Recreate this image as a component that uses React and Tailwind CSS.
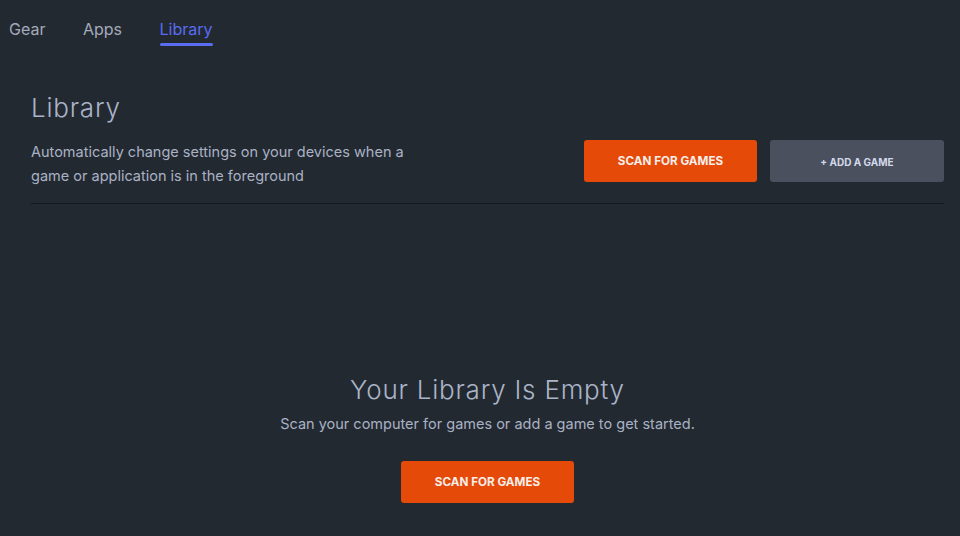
export default function App() {
  const tabs = ["Gear", "Apps", "Library"];
  const active = "Library";

  return (
    <div className="min-h-screen w-full bg-[#232931] font-['Inter',sans-serif] text-[#a9b2c4]">
      <nav className="flex h-[47px] items-end gap-[37.5px] pl-[9px]">
        {tabs.map((tab) => (
          <div key={tab} className="flex flex-col items-stretch">
            <span
              className={
                tab === active
                  ? "text-[16px] leading-[20px] text-[#5a6cf2]"
                  : "text-[16px] leading-[20px] text-[#a3abbb]"
              }
            >
              {tab}
            </span>
            <span
              className={
                tab === active
                  ? "mt-[4px] mb-[1px] h-[3px] rounded-full bg-[#5a6cf2]"
                  : "mt-[4px] mb-[1px] h-[3px]"
              }
            />
          </div>
        ))}
      </nav>

      <div className="pl-[31px] pr-[16px]">
        <h1 className="pt-[45px] text-[26px] font-light leading-[32px] tracking-[0.03em] text-[#aab4c8]">
          Library
        </h1>
        <div className="mt-[16px] flex items-start justify-between">
          <p className="w-[400px] text-[14.5px] leading-[23.5px] text-[#a9b2c4]">
            Automatically change settings on your devices when a game or application is in the foreground
          </p>
          <div className="flex gap-[13px]">
            <button
              type="button"
              className="flex h-[42px] w-[173px] items-center justify-center rounded-[3px] bg-[#e54a09] pt-[2px] text-[11.7px] font-bold text-[#f6eee9]"
            >
              SCAN FOR GAMES
            </button>
            <button
              type="button"
              className="flex h-[42px] w-[174px] items-center justify-center rounded-[3px] bg-[#4a505e] pt-[2px] text-[10px] font-bold text-[#d3d9ea]"
            >
              + ADD A GAME
            </button>
          </div>
        </div>
        <div className="mt-[16px] h-px bg-[#14181d]" />

        <div className="flex flex-col items-center pt-[170px]">
          <h2 className="text-[26px] font-light leading-[32px] tracking-[0.03em] text-[#aab4c8]">
            Your Library Is Empty
          </h2>
          <p className="mt-[6px] text-[14.5px] leading-[23px] text-[#a9b2c4]">
            Scan your computer for games or add a game to get started.
          </p>
          <button
            type="button"
            className="mt-[26px] flex h-[42px] w-[173px] items-center justify-center rounded-[3px] bg-[#e54a09] pt-[2px] text-[11.7px] font-bold text-[#f6eee9]"
          >
            SCAN FOR GAMES
          </button>
        </div>
      </div>
    </div>
  );
}
